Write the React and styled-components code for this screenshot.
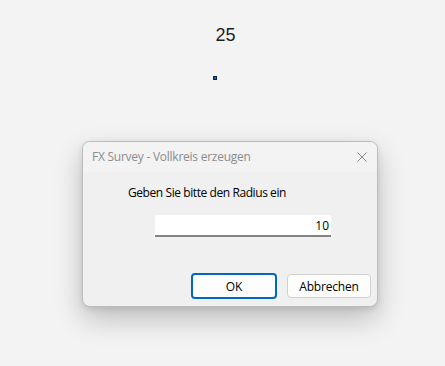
import React from "react";
import styled, { createGlobalStyle } from "styled-components";

const Global = createGlobalStyle`
  html, body { margin: 0; padding: 0; background: #f3f3f3; }
  body { font-family: "Noto Sans", "Liberation Sans", sans-serif; }
`;

const Page = styled.div`
  width: 445px;
  height: 366px;
  display: flex;
  flex-direction: column;
  align-items: center;
  box-sizing: border-box;
  padding-top: 24px;
`;

const Value = styled.div`
  font-family: "Liberation Sans", Arial, sans-serif;
  font-size: 18px;
  line-height: 22px;
  color: #1e1e1e;
  margin-left: 6px;
`;

const Point = styled.div`
  width: 2px;
  height: 2px;
  margin-top: 30px;
  margin-left: -15px;
  background: #1a5cd6;
  border: 1px solid #0b1f4a;
`;

const Dialog = styled.div`
  margin-top: 61px;
  margin-left: 15px;
  width: 296px;
  height: 166px;
  box-sizing: border-box;
  border: 1px solid #bdbdbd;
  border-radius: 8px;
  background: #f0f0f0;
  box-shadow: 0 12px 28px rgba(0, 0, 0, 0.22), 0 2px 6px rgba(0, 0, 0, 0.1);
  display: flex;
  flex-direction: column;
  overflow: hidden;
`;

const TitleBar = styled.div`
  height: 30px;
  background: #f3f3f3;
  display: flex;
  align-items: center;
  justify-content: space-between;
  padding: 0 9px 0 9px;
`;

const Title = styled.span`
  font-family: "Open Sans", "Noto Sans", sans-serif;
  font-size: 12px;
  color: #8c8c8c;
  letter-spacing: -0.25px;
  margin-top: -1px;
`;

const Close = styled.svg`
  width: 10px;
  height: 10px;
  margin-right: 1px;
`;

const Body = styled.div`
  flex: 1;
  display: flex;
  flex-direction: column;
  padding: 13px 0 0 45px;
`;

const Label = styled.div`
  font-family: "Open Sans", "Noto Sans", sans-serif;
  font-size: 12px;
  line-height: 16px;
  color: #000;
  letter-spacing: -0.42px;
`;

const Input = styled.div`
  margin-top: 14px;
  margin-left: 27px;
  width: 176px;
  height: 22px;
  box-sizing: border-box;
  background: #fff;
  border-bottom: 2px solid #858585;
  border-radius: 2px 2px 0 0;
  display: flex;
  align-items: center;
  justify-content: flex-end;
  padding-right: 2px;
  font-family: "Open Sans", "Noto Sans", sans-serif;
  font-size: 12px;
  color: #000;
`;

const Buttons = styled.div`
  margin-top: auto;
  display: flex;
  justify-content: flex-end;
  gap: 10px;
  padding: 0 6px 7px 0;
`;

const Button = styled.button`
  width: ${(p) => (p.$primary ? "86px" : "84px")};
  height: ${(p) => (p.$primary ? "26px" : "24px")};
  margin: ${(p) => (p.$primary ? "0" : "1px 0")};
  box-sizing: border-box;
  border: ${(p) => (p.$primary ? "2px solid #0067c0" : "1px solid #d0d0d0")};
  border-radius: 4px;
  background: #fdfdfd;
  font-family: "Open Sans", "Noto Sans", sans-serif;
  font-size: 12px;
  color: #000;
  letter-spacing: -0.2px;
  padding: 0;
  display: flex;
  align-items: center;
  justify-content: center;
`;

export default function App() {
  return (
    <>
      <Global />
      <Page>
        <Value>25</Value>
        <Point />
        <Dialog>
          <TitleBar>
            <Title>FX Survey - Vollkreis erzeugen</Title>
            <Close viewBox="0 0 10 10">
              <path d="M0.5 0.5 L9.5 9.5 M9.5 0.5 L0.5 9.5" stroke="#8a8a8a" strokeWidth="1" fill="none" />
            </Close>
          </TitleBar>
          <Body>
            <Label>Geben Sie bitte den Radius ein</Label>
            <Input>10</Input>
          </Body>
          <Buttons>
            <Button $primary>OK</Button>
            <Button>Abbrechen</Button>
          </Buttons>
        </Dialog>
      </Page>
    </>
  );
}
